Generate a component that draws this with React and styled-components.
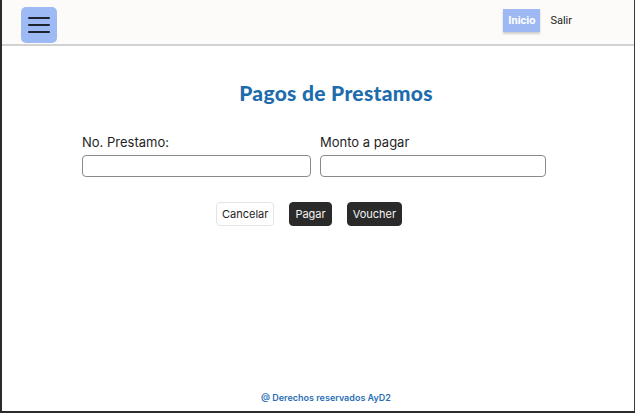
import React, { useState } from "react";
import styled, { createGlobalStyle } from "styled-components";

const GlobalStyle = createGlobalStyle`
  html, body {
    margin: 0;
    padding: 0;
    background: #ffffff;
  }
  * {
    box-sizing: border-box;
  }
`;

function App() {
  const [prestamo, setPrestamo] = useState("");
  const [monto, setMonto] = useState("");

  return (
    <Page>
      <GlobalStyle />
      <Header>
        <MenuButton aria-label="menu">
          <span />
          <span />
          <span />
        </MenuButton>
        <Nav>
          <NavLink $active>Inicio</NavLink>
          <NavLink>Salir</NavLink>
        </Nav>
      </Header>

      <Main>
        <Title>Pagos de Prestamos</Title>
        <FormGrid>
          <Field>
            <Label>No. Prestamo:</Label>
            <Input
              type="text"
              value={prestamo}
              onChange={(e) => setPrestamo(e.target.value)}
            />
          </Field>
          <Field>
            <Label>Monto a pagar</Label>
            <Input
              type="text"
              value={monto}
              onChange={(e) => setMonto(e.target.value)}
            />
          </Field>
        </FormGrid>
        <Actions>
          <Button $variant="light">Cancelar</Button>
          <Button>Pagar</Button>
          <Button>Voucher</Button>
        </Actions>
      </Main>

      <Footer>@ Derechos reservados AyD2</Footer>
    </Page>
  );
}

const Page = styled.div`
  height: 413px;
  display: flex;
  flex-direction: column;
  border-left: 2px solid #2b2b2b;
  border-bottom: 2px solid #2b2b2b;
  border-right: 1px solid #3a3a3a;
  font-family: Inter, "Noto Sans", sans-serif;
  color: #222;
`;

const Header = styled.header`
  height: 46px;
  flex-shrink: 0;
  display: flex;
  align-items: center;
  justify-content: space-between;
  padding: 0 62px 0 19px;
  background: #fcfbf9;
  border-bottom: 2px solid #d2d2d2;
`;

const MenuButton = styled.button`
  width: 36px;
  height: 36px;
  margin-top: 6px;
  border: none;
  border-radius: 5px;
  background: #9dbaf4;
  display: flex;
  flex-direction: column;
  justify-content: center;
  align-items: center;
  gap: 5px;
  padding: 0;
  cursor: pointer;

  span {
    display: block;
    width: 22px;
    height: 2px;
    border-radius: 1px;
    background: #1f2330;
  }
`;

const Nav = styled.nav`
  display: flex;
  align-items: center;
  gap: 10px;
  margin-bottom: 3px;
`;

const NavLink = styled.a`
  font-family: Roboto, "Liberation Sans", sans-serif;
  font-size: 11px;
  font-weight: ${(p) => (p.$active ? 700 : 400)};
  color: ${(p) => (p.$active ? "#ffffff" : "#222")};
  background: ${(p) => (p.$active ? "#9db8f2" : "transparent")};
  box-shadow: ${(p) => (p.$active ? "0 2px 2px rgba(0,0,0,0.18)" : "none")};
  padding: ${(p) => (p.$active ? "5px 5px" : "5px 0")};
  line-height: 13px;
  cursor: pointer;
`;

const Main = styled.main`
  flex: 1;
  padding: 34px 0 0 80px;
`;

const Title = styled.h1`
  margin: 0;
  width: 468px;
  padding-left: 40px;
  text-align: center;
  font-family: Lato, "Open Sans", sans-serif;
  font-weight: 900;
  font-size: 21px;
  line-height: 26px;
  color: #1d6cad;
  letter-spacing: 0.3px;
`;

const FormGrid = styled.div`
  display: grid;
  grid-template-columns: 229px 226px;
  column-gap: 9px;
  margin-top: 27px;
`;

const Field = styled.div`
  display: flex;
  flex-direction: column;
  gap: 4px;
`;

const Label = styled.label`
  font-size: 13px;
  line-height: 18px;
  color: #1f1f1f;
`;

const Input = styled.input`
  width: 100%;
  height: 22px;
  border: 1px solid #8a8a8a;
  border-radius: 4px;
  background: #fff;
  padding: 0 6px;
  font-size: 12px;
  outline: none;
`;

const Actions = styled.div`
  display: flex;
  align-items: center;
  gap: 15px;
  margin-top: 25px;
  padding-left: 134px;
`;

const Button = styled.button`
  height: 24px;
  padding: 0 5px;
  border-radius: 4px;
  font-family: Inter, "Noto Sans", sans-serif;
  font-size: 11px;
  cursor: pointer;
  border: 1px solid ${(p) => (p.$variant === "light" ? "#e4e4e4" : "#2a2a2a")};
  background: ${(p) => (p.$variant === "light" ? "#ffffff" : "#2a2a2a")};
  color: ${(p) => (p.$variant === "light" ? "#222" : "#f4f4f4")};
`;

const Footer = styled.footer`
  text-align: center;
  font-size: 9px;
  font-weight: 600;
  color: #2a6fb6;
  padding: 0 0 8px 16px;
`;

export default App;
